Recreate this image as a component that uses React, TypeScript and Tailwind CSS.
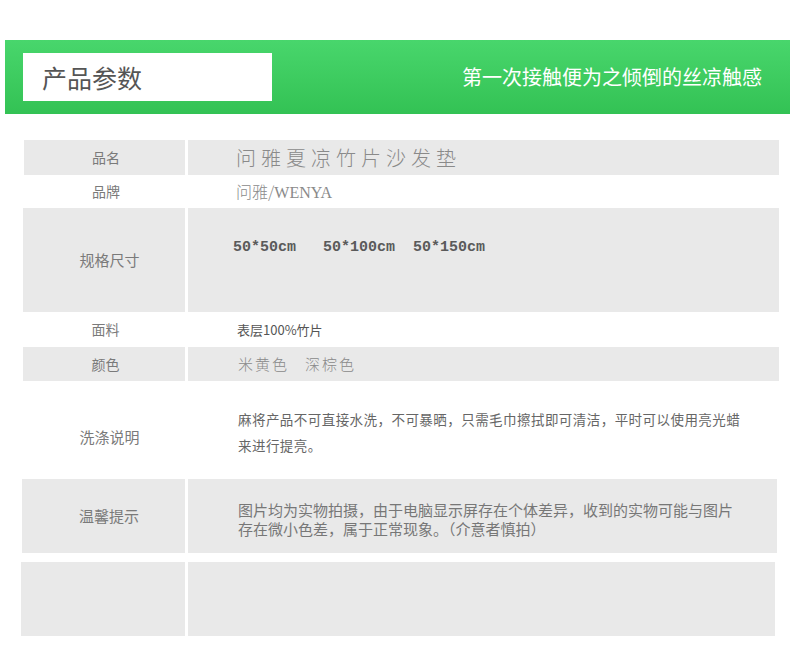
const sans = { fontFamily: '"Noto Sans CJK SC", "Liberation Sans", sans-serif' }

function Label({ text }: { text: string }) {
  const long = text.length > 2
  return (
    <span className={long ? 'text-[15px] text-[#7a7a7a] pl-[11px]' : 'text-[14px] text-[#7a7a7a] pl-[3px]'}>
      {text}
    </span>
  )
}

export default function App() {
  return (
    <div className="w-[790px] h-[651px] bg-white overflow-hidden" style={sans}>
      {/* green banner */}
      <div className="mt-[40px] ml-[5px] h-[74px] flex items-center justify-between bg-gradient-to-b from-[#48d66c] to-[#33c254]">
        <div className="ml-[18px] w-[249px] h-[48px] bg-white flex items-center pl-[19px]">
          <span className="text-[25px] text-[#555] leading-none">产品参数</span>
        </div>
        <span className="mr-[28px] text-[20px] text-white leading-none">第一次接触便为之倾倒的丝凉触感</span>
      </div>

      {/* parameter table */}
      <div className="mt-[26px] flex flex-col">
        <div className="flex h-[35px]">
          <div className="ml-[24px] w-[161px] bg-[#e9e9e9] flex items-center justify-center">
            <Label text="品名" />
          </div>
          <div className="ml-[3px] w-[591px] bg-[#e9e9e9] flex items-center pl-[48px]">
            <span className="text-[20px] tracking-[5px] font-light text-[#8a8a8a]">问雅夏凉竹片沙发垫</span>
          </div>
        </div>

        <div className="flex h-[33px]">
          <div className="ml-[24px] w-[161px] flex items-center justify-center">
            <Label text="品牌" />
          </div>
          <div className="ml-[3px] w-[591px] flex items-center pl-[48px]">
            <span className="text-[16px] text-[#8a8a8a] font-light">
              问雅/<span style={{ fontFamily: '"Liberation Serif", serif' }}>WENYA</span>
            </span>
          </div>
        </div>

        <div className="flex h-[104px]">
          <div className="ml-[23px] w-[162px] bg-[#e9e9e9] flex items-center justify-center">
            <Label text="规格尺寸" />
          </div>
          <div className="ml-[3px] w-[591px] bg-[#e9e9e9] pl-[45px] pt-[24px]">
            <span
              className="text-[15px] leading-[20px] text-[#5a5a5a] whitespace-pre font-bold"
              style={{ fontFamily: '"Liberation Mono", monospace' }}
            >
              {'50*50cm   50*100cm  50*150cm'}
            </span>
          </div>
        </div>

        <div className="flex h-[35px]">
          <div className="ml-[23px] w-[162px] flex items-center justify-center">
            <Label text="面料" />
          </div>
          <div className="ml-[3px] w-[591px] flex items-center pl-[49px]">
            <span className="text-[13px] text-[#555]">表层100%竹片</span>
          </div>
        </div>

        <div className="flex h-[34px]">
          <div className="ml-[23px] w-[162px] bg-[#e9e9e9] flex items-center justify-center">
            <Label text="颜色" />
          </div>
          <div className="ml-[3px] w-[591px] bg-[#e9e9e9] flex items-center pl-[50px]">
            <span className="text-[15px] tracking-[2px] font-light text-[#8a8a8a] whitespace-pre">米黄色   深棕色</span>
          </div>
        </div>

        <div className="flex h-[98px]">
          <div className="ml-[23px] w-[162px] flex items-center justify-center pt-[14px]">
            <Label text="洗涤说明" />
          </div>
          <div className="ml-[3px] w-[591px] pl-[50px] pt-[25px]">
            <p className="w-[530px] text-[13.5px] tracking-[0.45px] leading-[26px] text-[#666]">
              麻将产品不可直接水洗，不可暴晒，只需毛巾擦拭即可清洁，平时可以使用亮光蜡
              <br />
              来进行提亮。
            </p>
          </div>
        </div>

        <div className="flex h-[74px]">
          <div className="ml-[22px] w-[163px] bg-[#e9e9e9] flex items-center justify-center">
            <Label text="温馨提示" />
          </div>
          <div className="ml-[3px] w-[589px] bg-[#e9e9e9] pl-[50px] pt-[21px]">
            <p className="w-[505px] text-[15px] leading-[19px] text-[#777]">
              图片均为实物拍摄，由于电脑显示屏存在个体差异，收到的实物可能与图片存在微小色差，属于正常现象。（介意者慎拍）
            </p>
          </div>
        </div>

        <div className="flex h-[74px] mt-[9px]">
          <div className="ml-[21px] w-[164px] bg-[#e9e9e9]" />
          <div className="ml-[3px] w-[587px] bg-[#e9e9e9]" />
        </div>
      </div>
    </div>
  )
}
